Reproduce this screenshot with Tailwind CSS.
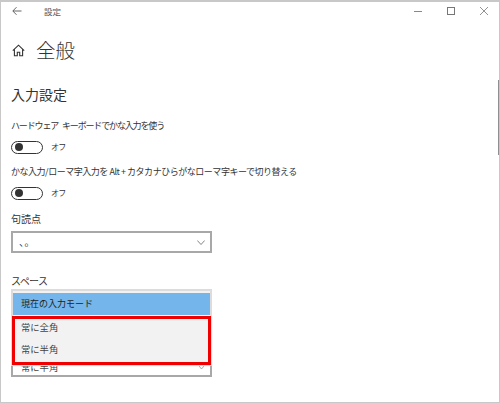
<!DOCTYPE html>
<html lang="ja">
<head>
<meta charset="utf-8">
<script src="https://cdn.jsdelivr.net/npm/@tailwindcss/browser@4"></script>
</head>
<body class="bg-white">
<div class="relative w-[500px] h-[403px] overflow-hidden bg-white border-t-2 border-l border-b border-r border-[#c8c8c8] text-[#333] font-['Noto_Sans_CJK_JP','Noto_Sans',sans-serif]">
  <div class="flex items-center h-[18px]">
    <svg class="ml-[11px] w-[10px] h-[10px]" viewBox="0 0 10 10" fill="none" stroke="#555" stroke-width="0.9"><path d="M9.5 5H1M4.5 1.2 0.8 5l3.7 3.8"/></svg>
    <span class="ml-[22px] text-[8.5px] leading-none text-[#555]">設定</span>
    <div class="ml-auto flex items-center">
      <div class="w-[8px] h-px bg-[#888] mr-[25px]"></div>
      <div class="w-[8px] h-[8px] border border-[#777] mr-[25px]"></div>
      <svg class="w-[8px] h-[8px] mr-[11px]" viewBox="0 0 8 8" fill="none" stroke="#777" stroke-width="0.8"><path d="M0 0l8 8M8 0 0 8"/></svg>
    </div>
  </div>
  <div class="flex items-center mt-[18px] h-[24px]">
    <svg class="ml-[11px] w-[13px] h-[13px]" viewBox="0 0 13 13" fill="none" stroke="#333" stroke-width="1.1"><path d="M0.8 6.6 6.5 1.2l5.7 5.4M2.4 5.4v6.4h2.9V8.2h2.4v3.6h2.9V5.4"/></svg>
    <h1 class="ml-[11px] text-[19.5px] leading-none font-light">全般</h1>
  </div>
  <h2 class="mt-[23px] ml-[10px] text-[14px] leading-[18px] font-normal">入力設定</h2>
  <p class="mt-[16px] ml-[10px] text-[9px] tracking-[-1.15px] [word-spacing:3px] leading-[14px] whitespace-nowrap">ハードウェア キーボードでかな入力を使う</p>
  <div class="flex items-center mt-[7px] ml-[10px] h-[14px]">
    <div class="w-[32px] h-[13px] rounded-full border-[1.5px] border-[#333] flex items-center pl-[3px]"><div class="w-[8px] h-[8px] rounded-full bg-[#333]"></div></div>
    <span class="ml-[8px] text-[8px] tracking-[-0.8px] leading-none">オフ</span>
  </div>
  <p class="mt-[11px] ml-[10px] text-[9px] tracking-[-0.47px] leading-[14px] whitespace-nowrap">かな入力/ローマ字入力を Alt + カタカナひらがなローマ字キーで切り替える</p>
  <div class="flex items-center mt-[7px] ml-[10px] h-[14px]">
    <div class="w-[32px] h-[13px] rounded-full border-[1.5px] border-[#333] flex items-center pl-[3px]"><div class="w-[8px] h-[8px] rounded-full bg-[#333]"></div></div>
    <span class="ml-[8px] text-[8px] tracking-[-0.8px] leading-none">オフ</span>
  </div>
  <p class="mt-[12px] ml-[10px] text-[10px] leading-[14px]">句読点</p>
  <div class="mt-[5px] ml-[10px] w-[201px] h-[22px] border-2 border-[#a8a8a8] flex items-center justify-between pl-[6px] pr-[5px]">
    <span class="text-[10px] leading-none tracking-[0.5px]">、。</span>
    <svg class="w-[8px] h-[5px]" viewBox="0 0 8 5" fill="none" stroke="#666" stroke-width="0.8"><path d="M0.3 0.5 4 4.5l3.7-4"/></svg>
  </div>
  <p class="mt-[21px] ml-[10px] text-[10px] tracking-[-0.6px] leading-[14px]">スペース</p>
  <div class="mt-[55px] ml-[10px] w-[201px] h-[34px] border-2 border-t-0 border-[#a8a8a8] flex items-end justify-between pl-[8px] pr-[6px] pb-[1px] overflow-hidden">
    <span class="text-[9.3px] leading-[14px] text-[#444]">常に半角</span>
    <svg class="w-[5px] h-[3px] mb-[5px]" viewBox="0 0 5 3" fill="none" stroke="#888" stroke-width="0.7"><path d="M0 0 2.5 3 5 0"/></svg>
  </div>
  <div class="absolute left-[10px] top-[287px] w-[201px] h-[77px] bg-[#f2f2f2] border-2 border-[#dcdcdc]">
    <div class="h-[22px] bg-[#74b6ec] flex items-center pl-[8px] mt-[2px] text-[9px] text-[#222]">現在の入力モード</div>
    <div class="absolute left-[-1px] top-[25px] w-[199px] h-[49px] border-[3px] border-[#f00000] flex flex-col text-[9.3px] text-[#444] pl-[6px]">
      <div class="h-[17px] shrink-0 flex items-center">常に全角</div>
      <div class="h-[26px] shrink-0 flex items-center pt-[1px]">常に半角</div>
    </div>
  </div>
  <div class="absolute right-0 top-[78px] w-[1.5px] h-[75px] bg-[#8f8f8f]"></div>
</div>
</body>
</html>
